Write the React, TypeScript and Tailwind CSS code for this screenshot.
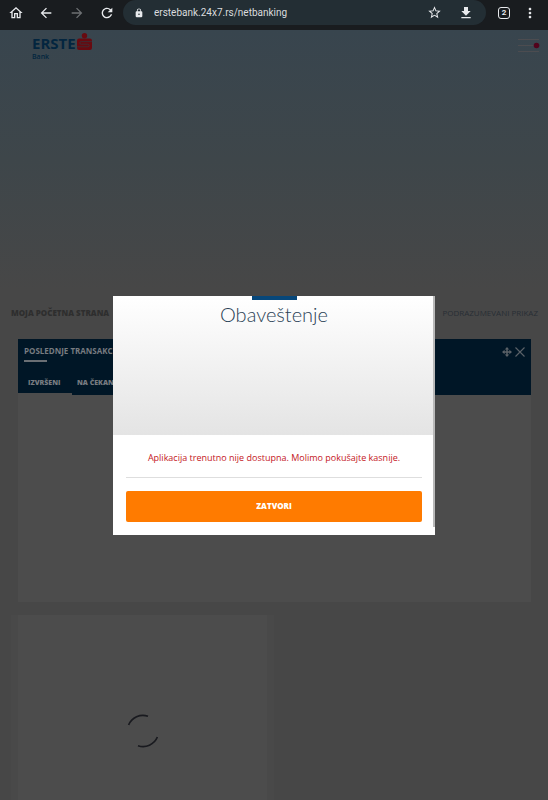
import React from "react";
import {
  MdOutlineHome,
  MdArrowBack,
  MdArrowForward,
  MdRefresh,
  MdLock,
  MdStarBorder,
  MdDownload,
  MdMoreVert,
} from "react-icons/md";

const tabs = [
  { id: "done", name: "IZVRŠENI", className: "h-[21px] w-[54px] pl-[10px]" },
  { id: "pending", name: "NA ČEKANJU", className: "h-[23px] px-[5px] bg-[#001626]" },
];

const BrowserBar: React.FC = () => (
  <div className="h-[30px] bg-[#191c1f] flex items-start text-[#e8eaed] font-['Roboto',sans-serif]">
    <div className="h-[25px] w-[123px] shrink-0 flex items-center justify-between pl-2 pr-2">
      <button aria-label="Home"><MdOutlineHome className="size-4" /></button>
      <button aria-label="Back"><MdArrowBack className="size-4" /></button>
      <button aria-label="Forward" className="text-[#6d7073]"><MdArrowForward className="size-4" /></button>
      <button aria-label="Reload"><MdRefresh className="size-4" /></button>
    </div>
    <div className="h-[25px] flex-1 min-w-0 flex items-center rounded-r-full rounded-l-full bg-[#232e34] pl-[11px] pr-3">
      <MdLock className="size-[10px] shrink-0" />
      <input
        aria-label="Address"
        readOnly
        defaultValue="erstebank.24x7.rs/netbanking"
        className="ml-[10px] flex-1 min-w-0 bg-transparent text-[10px] text-[#dadcde] outline-none"
      />
      <button aria-label="Bookmark"><MdStarBorder className="size-[15px]" /></button>
      <button aria-label="Download" className="ml-4"><MdDownload className="size-4" /></button>
    </div>
    <div className="h-[25px] flex items-center pl-3 pr-[10px] gap-3">
      <button
        aria-label="Open tabs"
        className="size-3 rounded-[3px] border border-[#e8eaed] flex items-center justify-center text-[8px] leading-none font-bold"
      >
        2
      </button>
      <button aria-label="More"><MdMoreVert className="size-4" /></button>
    </div>
  </div>
);

const Logo: React.FC = () => (
  <div className="text-[#03253f] font-['Open_Sans',sans-serif]">
    <div className="flex items-start gap-px">
      <span className="pt-px text-[15px] leading-[18px] font-bold">ERSTE</span>
      <svg viewBox="0 0 15 18" className="w-[15px] h-[18px]" aria-hidden="true">
        <circle cx="7.5" cy="2.7" r="2.7" fill="#680a10" />
        <rect y="5.5" width="15" height="11.5" rx="2.2" fill="#680a10" />
        <path d="M15 8.6H4.2q-1.4 0-1.4 1.3t1.4 1.3h6.6q1.4 0 1.4 1.3t-1.4 1.3H0" fill="none" stroke="#3c2f36" strokeWidth="0.9" />
      </svg>
    </div>
    <div className="text-[7px] leading-[9px] font-semibold">Bank</div>
  </div>
);

const Notice: React.FC = () => (
  <div
    role="dialog"
    aria-labelledby="notice-title"
    className="relative w-[322px] max-w-full bg-white text-center"
  >
    <div className="h-[139px] bg-linear-to-b from-white to-[#e4e4e4]">
      <div className="mx-auto h-1 w-[45px] bg-[#07477a]" />
      <h2 id="notice-title" className="pt-[2px] text-[20px] leading-6 font-light text-[#2b4256]">
        Obaveštenje
      </h2>
    </div>
    <div className="px-[13px] pb-[13px]">
      <p className="h-[43px] pt-4 border-b border-[#dedede] font-['Open_Sans',sans-serif] text-[9px] leading-[14px] text-[#c4161c]">
        Aplikacija trenutno nije dostupna. Molimo pokušajte kasnije.
      </p>
      <button className="mt-[13px] h-[31px] w-full rounded-[2px] bg-[#ff7b00] font-['Open_Sans',sans-serif] text-[8px] font-extrabold text-white">
        ZATVORI
      </button>
    </div>
    <div className="absolute top-0 right-0 h-[231px] w-[2px] bg-[#b9b9b9]" />
  </div>
);

const App: React.FC = () => {
  return (
    <div className="min-h-screen flex flex-col bg-[#474747] font-['Lato','Noto_Sans',sans-serif]">
      <BrowserBar />
      <div className="relative flex-1 flex flex-col">
        <header className="h-[260px] bg-linear-to-b from-[#38454e] via-[#3e464a] to-[#474747] flex justify-between items-start pt-[3px] pl-8 pr-2">
          <Logo />
          <button aria-label="Menu" className="mt-[6px]">
            <svg viewBox="0 0 22 14" className="w-[22px] h-[14px]">
              <path d="M0 .5h21M0 6.5h16M0 12.5h21" stroke="#4c4c50" strokeWidth="1" />
              <circle cx="18.5" cy="6.5" r="2.8" fill="#52031c" />
            </svg>
          </button>
        </header>
        <main className="flex-1 flex flex-col font-['Open_Sans',sans-serif]">
          <div className="h-[49px] flex items-center justify-between pl-[11px] pr-[10px] pb-3 pt-[9px] text-[8px] leading-3">
            <h1 className="font-extrabold text-[#2e2e2e]">MOJA POČETNA STRANA</h1>
            <a href="#default" className="text-[#282e35]">PODRAZUMEVANI PRIKAZ</a>
          </div>
          <section className="ml-[18px] mr-[17px] h-[263px] bg-[#4c4c4c]">
            <div className="h-[54px] bg-[#001626] flex flex-col justify-between text-[#777b80]">
              <div className="flex justify-between px-[6px] pt-[5px]">
                <div>
                  <h2 className="text-[8px] leading-[14px] font-bold">POSLEDNJE TRANSAKCIJE</h2>
                  <div className="mt-[2px] h-[2px] w-[23px] bg-[#6a6f74]" />
                </div>
                <div className="flex items-start gap-[3px] pt-[3px]">
                  <button aria-label="Move" className="h-[10px]">
                    <svg viewBox="0 0 10 10" className="size-[10px]">
                      <path d="M5 1.5v7M1.5 5h7" stroke="#5b6268" strokeWidth="1.5" />
                      <path d="M5 0 7.2 2.6H2.8zM5 10 2.8 7.4h4.4zM0 5l2.6-2.2v4.4zM10 5 7.4 7.2V2.8z" fill="#5b6268" />
                    </svg>
                  </button>
                  <button aria-label="Close" className="h-[10px]">
                    <svg viewBox="0 0 10 10" className="size-[10px]">
                      <path d="M.5.5l9 9M9.5.5l-9 9" stroke="#5b6268" strokeWidth="1.1" />
                    </svg>
                  </button>
                </div>
              </div>
              <div className="h-[21px] flex items-start">
                {tabs.map((tab) => (
                  <button
                    key={tab.id}
                    className={`${tab.className} flex items-start pt-[5px] text-[7px] leading-3 font-extrabold whitespace-nowrap`}
                  >
                    {tab.name}
                  </button>
                ))}
                <div className="h-[23px] flex-1 bg-[#001626]" />
              </div>
            </div>
          </section>
          <section className="mt-[13px] ml-[11px] w-[48%] flex-1 bg-[#494949] px-[7px] flex">
            <div className="flex-1 bg-[#4c4c4c] flex justify-center pt-[99px]">
              <svg viewBox="0 0 34 34" className="size-[34px]" role="status" aria-label="Loading">
                <path d="M2.6 11A15.5 15.5 0 0 1 22 2.3M31.4 23A15.5 15.5 0 0 1 12 31.7" fill="none" stroke="#191a1f" strokeWidth="1.7" />
              </svg>
            </div>
          </section>
        </main>
        <div className="absolute inset-0 flex items-center justify-center">
          <Notice />
        </div>
      </div>
    </div>
  );
};

export default App;
